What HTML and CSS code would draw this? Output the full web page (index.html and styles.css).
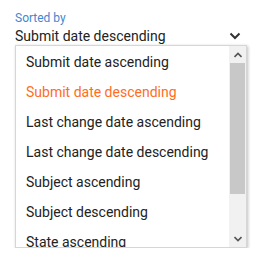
FILE: index.html
```html
<!DOCTYPE html>
<html lang="en">
<head>
    <meta charset="UTF-8">
    <title>Sort</title>
    <link rel="stylesheet" href="styles.css">
</head>
<body>
    <div class="field">
        <div class="label">Sorted by</div>
        <div class="select">
            <span class="value">Submit date descending</span>
            <svg class="chevron" width="12" height="8" viewBox="0 0 12 8"><path d="M1.5 1.5 L6 6 L10.5 1.5" fill="none" stroke="#333" stroke-width="2"/></svg>
        </div>
        <div class="dropdown">
            <div class="options">
                <div class="option">Submit date ascending</div>
                <div class="option active">Submit date descending</div>
                <div class="option">Last change date ascending</div>
                <div class="option">Last change date descending</div>
                <div class="option">Subject ascending</div>
                <div class="option">Subject descending</div>
                <div class="option">State ascending</div>
            </div>
            <div class="scrollbar">
                <div class="arrow"><svg width="8" height="6" viewBox="0 0 8 6"><path d="M0.5 5 L4 1.5 L7.5 5" fill="none" stroke="#555" stroke-width="1.6"/></svg></div>
                <div class="track"><div class="thumb"></div></div>
                <div class="arrow"><svg width="8" height="6" viewBox="0 0 8 6"><path d="M0.5 1 L4 4.5 L7.5 1" fill="none" stroke="#555" stroke-width="1.6"/></svg></div>
            </div>
        </div>
    </div>
</body>
</html>
```
FILE: styles.css
```css
* {
    margin: 0;
    padding: 0;
    box-sizing: border-box;
    font-family: Roboto, "Liberation Sans", sans-serif;
}

body {
    background: #fff;
}

.field {
    width: 260px;
    padding: 11px 13px 0 15px;
}

.label {
    font-size: 12px;
    line-height: 14px;
    color: #3f88d0;
}

.select {
    display: flex;
    align-items: center;
    justify-content: space-between;
    height: 20px;
    padding-top: 1px;
    padding-right: 6px;
}

.value {
    font-size: 14px;
    color: #222;
}

.dropdown {
    width: 232px;
    height: 203px;
    display: flex;
    background: #fff;
    border: 1px solid #d6d6d6;
    box-shadow: 1px 1px 3px rgba(0, 0, 0, 0.25);
    overflow: hidden;
}

.options {
    flex: 1;
    min-width: 0;
    padding-top: 1px;
}

.option {
    height: 30px;
    line-height: 30px;
    padding-left: 10px;
    font-size: 14px;
    color: #222;
    white-space: nowrap;
}

.option.active {
    color: #ff6d22;
}

.scrollbar {
    width: 17px;
    display: flex;
    flex-direction: column;
    background: #f1f1f1;
}

.arrow {
    height: 17px;
    display: flex;
    align-items: center;
    justify-content: center;
}

.track {
    flex: 1;
    padding: 0 1px;
}

.thumb {
    height: 131px;
    background: #c8c8c8;
}
```
